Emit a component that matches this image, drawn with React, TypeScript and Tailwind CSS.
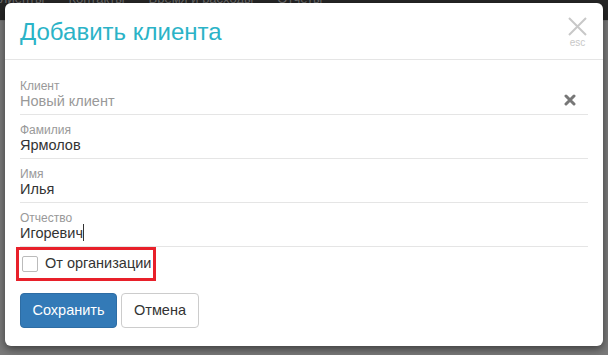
import React from "react";

const font = { fontFamily: '"Liberation Sans", Arial, sans-serif' };

function Field({ label, value, placeholder, caret, clear }: { label: string; value: string; placeholder?: boolean; caret?: boolean; clear?: boolean }) {
  return (
    <div className="relative border-b border-[#e5e5e5] pt-[9px] pb-[4px]">
      <div className="text-[12px] leading-[12px] text-[#999]">{label}</div>
      <div className={`text-[14.5px] leading-[18px] ${placeholder ? "text-[#999]" : "text-[#333]"}`}>
        {value}
        {caret && <span className="inline-block w-[1px] h-[17px] bg-[#333] align-[-3px]" />}
      </div>
      {clear && (
        <svg className="absolute right-[12px] top-[23px]" width="12" height="12" viewBox="0 0 12 12">
          <path d="M2 2 L10 10 M10 2 L2 10" stroke="#777" strokeWidth="3" strokeLinecap="round" />
        </svg>
      )}
    </div>
  );
}

export default function App() {
  return (
    <div className="relative w-[608px] h-[355px] overflow-hidden bg-[#7a7a7a]" style={font}>
      <div className="absolute left-0 top-0 w-full h-[20px] bg-[#262626] overflow-hidden">
        <div className="flex gap-[24px] -mt-[8px] ml-[-6px] text-[13px] text-[#6a6a6a] leading-[13px] whitespace-nowrap">
          <span>клиенты</span>
          <span>Контакты</span>
          <span>Время и расходы</span>
          <span>Отчеты</span>
        </div>
      </div>
      <div className="absolute left-0 top-[20px] w-full h-[1px] bg-[#6e6e6e]" />
      <div className="absolute left-[5px] top-[3px] w-[598px] h-[343px] bg-white rounded-[6px] shadow-[0_3px_9px_rgba(0,0,0,0.5)] flex flex-col">
        <div className="flex justify-between items-start h-[57px] border-b border-[#e5e5e5] pl-[15px] pr-[16px]">
          <div className="text-[24px] leading-[28px] text-[#2bb3c7] mt-[15px]">Добавить клиента</div>
          <div className="flex flex-col items-center mt-[14px]">
            <svg width="19" height="19" viewBox="0 0 19 19">
              <path d="M1 1 L18 18 M18 1 L1 18" stroke="#c8c8c8" strokeWidth="2" />
            </svg>
            <span className="text-[10px] leading-[10px] text-[#c8c8c8] mt-[2px]">esc</span>
          </div>
        </div>
        <div className="pl-[15px] pr-[15px] pt-[11px]">
          <Field label="Клиент" value="Новый клиент" placeholder clear />
          <Field label="Фамилия" value="Ярмолов" />
          <Field label="Имя" value="Илья" />
          <Field label="Отчество" value="Игоревич" caret />
          <div className="flex">
            <div className="flex items-center gap-[7px] border-[3px] border-[#e8202a] ml-[-4px] pl-[3px] pr-[2px] h-[34px] whitespace-nowrap">
              <div className="w-[16px] h-[16px] border border-[#bbb] rounded-[2px] bg-white" />
              <span className="text-[14.5px] text-[#333]">От организации</span>
            </div>
          </div>
          <div className="flex gap-[4px] mt-[12px]">
            <button className="h-[35px] w-[97px] rounded-[4px] bg-[#337ab7] border border-[#2e6da4] text-white text-[14.5px]">Сохранить</button>
            <button className="h-[35px] w-[78px] rounded-[4px] bg-white border border-[#ccc] text-[#333] text-[14.5px]">Отмена</button>
          </div>
        </div>
      </div>
    </div>
  );
}
